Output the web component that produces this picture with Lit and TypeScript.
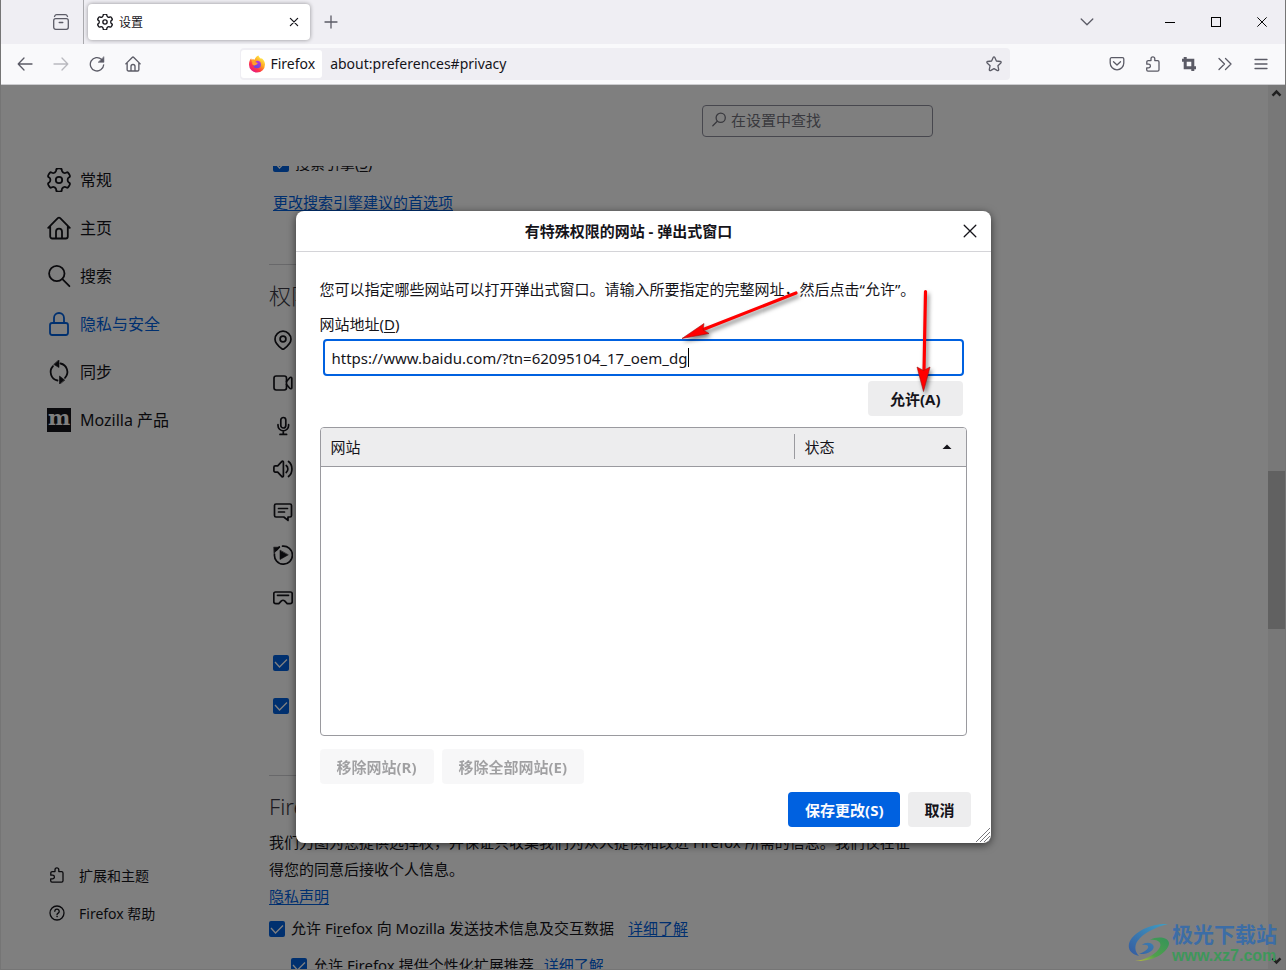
import { LitElement, html, css, svg, type TemplateResult } from "lit";
import { customElement, state } from "lit/decorators.js";

/* ---------- icons ---------- */

/* Six-toothed cog: corner points in polar form, joined by smooth curves. */
const cogPath = (() => {
  const corners: [number, number][] = [];
  for (let k = 0; k < 6; k++) {
    for (const [offset, radius] of [[-13, 12], [13, 12], [19, 8.8], [41, 8.8]]) {
      const angle = ((60 * k - 90 + offset) * Math.PI) / 180;
      corners.push([12 + radius * Math.cos(angle), 12 + radius * Math.sin(angle)]);
    }
  }
  const cut = (a: [number, number], b: [number, number], t: number) =>
    `${(a[0] + (b[0] - a[0]) * t).toFixed(2)} ${(a[1] + (b[1] - a[1]) * t).toFixed(2)}`;
  return corners
    .map((point, i) => {
      const next = corners[(i + 1) % corners.length];
      const after = corners[(i + 2) % corners.length];
      const start = i === 0 ? `M${cut(point, next, 0.6)}` : "";
      return `${start}L${cut(point, next, 0.6)}Q${next[0].toFixed(2)} ${next[1].toFixed(2)} ${cut(next, after, 0.4)}`;
    })
    .join("") + "Z";
})();

const ICONS: Record<string, { box: number; body: TemplateResult }> = {
  gear: { box: 24, body: svg`<path d=${cogPath}/><circle cx="12" cy="12" r="3.200"/>` },
  home: {
    box: 24,
    body: svg`<path d="M1.200 11.800 10.800 2.200c.7-.7 1.700-.7 2.400 0l9.600 9.600M3.200 10v10.500a2 2 0 0 0 2 2h13.600a2 2 0 0 0 2-2V10M9 22.300v-6.600a3 3 0 0 1 6 0v6.600"/>`,
  },
  search: { box: 24, body: svg`<circle cx="9.800" cy="9.500" r="7.700"/><path d="m15.400 15.200 7 7"/>` },
  lock: {
    box: 24,
    body: svg`<rect x="3" y="11" width="18" height="12" rx="2.200"/><path d="M7 11V6a5 5 0 0 1 10 0v5"/>`,
  },
  sync: {
    box: 24,
    body: svg`<path d="M10.500 20.500A8.600 8.600 0 0 1 6 6.200M13.500 3.500A8.600 8.600 0 0 1 18 17.800"/><path class="solid" d="M12 0v7.500L7 4.600zM12.500 24v-8l5 4z"/>`,
  },
  view: {
    box: 16,
    body: svg`<rect x=".7" y="4.700" width="14.600" height="10.600" rx="2"/><path d="M1.500 2.500C2 1.300 2.600.7 3.600.7h8.800c1 0 1.600.6 2.100 1.800M6.200 8.500h3.600"/>`,
  },
  back: { box: 16, body: svg`<path d="M15 8H1.200M7 2 1.200 8 7 14"/>` },
  forward: { box: 16, body: svg`<path d="M1 8h13.800M9 2l5.800 6L9 14"/>` },
  reload: {
    box: 16,
    body: svg`<path d="M14.700 8.800A6.700 6.700 0 1 1 12.600 3.400L14 4.800"/><path class="solid" d="M14.900 1v5.300H9.500z"/>`,
  },
  star: {
    box: 16,
    body: svg`<path d="M7.300 1.300c.3-.6 1.100-.6 1.400 0l1.700 3.700 4 .5c.7.1 1 .9.500 1.400l-3 2.800.8 4c.1.700-.6 1.200-1.200.9L8 12.600l-3.500 2c-.6.300-1.300-.2-1.200-.9l.8-4-3-2.800c-.5-.5-.2-1.300.5-1.400l4-.5z"/>`,
  },
  pocket: {
    box: 16,
    body: svg`<path d="M2.500 1.700h11c.7 0 1.300.6 1.300 1.300V7a6.800 6.800 0 0 1-13.600 0V3c0-.7.6-1.300 1.300-1.300zM4.500 5.800 8 9l3.500-3.200"/>`,
  },
  puzzle: {
    box: 16,
    body: svg`<path d="M3 15.200h9.600c.8 0 1.400-.6 1.400-1.400V6c0-.8-.6-1.400-1.400-1.400H9.800V2.700a1.900 1.900 0 0 0-3.800 0v1.900H3.200c-.8 0-1.400.6-1.400 1.400v2.200h1.800a1.700 1.700 0 0 1 0 3.600H1.700v2c0 .8.5 1.400 1.300 1.400z"/>`,
  },
  crop: { box: 16, body: svg`<path class="thick" d="M4.200 1v10.800H15M1 4.200h10.800V15"/>` },
  more: { box: 16, body: svg`<path d="m2 2.500 5.500 5.500L2 13.500M8.500 2.500 14 8l-5.500 5.500"/>` },
  menu: { box: 16, body: svg`<path d="M2 3.500h12M2 8h12M2 12.500h12"/>` },
  plus: { box: 16, body: svg`<path d="M8 2v12M2 8h12"/>` },
  close: { box: 16, body: svg`<path d="m2.200 2.200 11.600 11.600M13.800 2.200 2.200 13.800"/>` },
  chevron: { box: 16, body: svg`<path d="m2.200 5 5.800 5.800L13.800 5"/>` },
  minimize: { box: 16, body: svg`<path class="crisp" d="M3 8.500h10"/>` },
  maximize: { box: 16, body: svg`<rect class="crisp" x="3.500" y="3.500" width="9" height="9"/>` },
  help: {
    box: 16,
    body: svg`<circle cx="8" cy="8" r="7"/><path d="M5.800 6.300a2.200 2.200 0 1 1 3.400 1.800c-.8.5-1.200.8-1.200 1.700"/><circle class="solid" cx="8" cy="11.700" r=".4"/>`,
  },
  find: { box: 16, body: svg`<circle cx="9.700" cy="5.800" r="4.600"/><path d="M6.300 9.300 1.800 13.800"/>` },
  location: {
    box: 20,
    body: svg`<path d="M10 1.200a8 8 0 0 1 8 8c0 3.400-3 6.500-6.700 9.500a2 2 0 0 1-2.600 0C5 15.700 2 12.600 2 9.200a8 8 0 0 1 8-8z"/><circle cx="10" cy="9" r="2.900"/>`,
  },
  camera: {
    box: 20,
    body: svg`<rect x="1" y="3" width="12.500" height="14" rx="2.200"/><path d="m13.500 8.500 3.300-3.800c.7-.8 2-.5 2 .6v9.400c0 1.100-1.300 1.400-2 .6l-3.300-3.800"/>`,
  },
  mic: {
    box: 20,
    body: svg`<rect x="7.800" y="1.500" width="5" height="10.500" rx="2.500"/><path d="M5 8.700v.8a5.300 5.300 0 0 0 10.600 0v-.8M10.300 15v3.500M7 18.400h6.600"/>`,
  },
  speaker: {
    box: 20,
    body: svg`<path d="M.9 8.200c0-.8.500-1.300 1.300-1.300h2.500l4.200-4.500c.6-.6 1.500-.2 1.500.6v14c0 .8-.9 1.200-1.500.6l-4.200-4.500H2.200c-.8 0-1.300-.5-1.300-1.300zM13.200 6.500a4.500 4.500 0 0 1 0 7M15.500 2.500c4.600 3.500 4.600 11.500 0 15"/>`,
  },
  bubble: {
    box: 20,
    body: svg`<path d="M3 2h14c.9 0 1.500.6 1.500 1.500v10c0 .9-.6 1.500-1.500 1.500h-2v3.400L10.800 15H3c-.9 0-1.500-.6-1.500-1.500v-10C1.500 2.600 2.100 2 3 2zM5.500 6.500h9M5.500 10h6"/>`,
  },
  autoplay: {
    box: 20,
    body: svg`<path d="M9.500 1.200A9 9 0 1 1 1.500 9M6.200 2 3.500 5"/><path class="solid" d="M7 5.500v9l8-4.500zM1 2.200h6L1.200 8z"/>`,
  },
  headset: {
    box: 20,
    body: svg`<path d="M2.500 4h15C18.600 4 19.200 4.800 19.200 5.700v8c0 1.200-.8 2-2 2h-3L11.600 12.900c-.9-.9-2.300-.9-3.200 0L5.800 15.700h-3c-1.200 0-2-.8-2-2v-8C.8 4.800 1.400 4 2.500 4zM4.500 7.300h11"/>`,
  },
};

const icon = (name: string, size = 16) => {
  const { box, body } = ICONS[name];
  return html`<svg class="icon" width=${size} height=${size} viewBox="0 0 ${box} ${box}" aria-hidden="true">${body}</svg>`;
};

const firefoxLogo = html`<svg width="18" height="18" viewBox="0 0 18 18" aria-hidden="true">
  <defs>
    <linearGradient id="flame" x1=".85" y1=".1" x2=".2" y2=".95">
      <stop offset="0" stop-color="#fff44f" /><stop offset=".4" stop-color="#ffa21e" />
      <stop offset=".7" stop-color="#ff3647" /><stop offset="1" stop-color="#e31587" />
    </linearGradient>
    <linearGradient id="globe" x1=".7" y1="0" x2=".3" y2="1">
      <stop offset="0" stop-color="#b833e1" /><stop offset="1" stop-color="#5b4be0" />
    </linearGradient>
  </defs>
  <path fill="url(#flame)" d="M10.500.6c.4 1.600 1.500 2.300 2.600 3.300.3-.2.400-.6.400-1C15.800 4.600 17 7 17 9.500A8 8 0 0 1 1 9.700C1 7 1.800 4.800 3.200 3.300c0 .7.1 1.100.4 1.500.9-.4 1.900-.4 2.900 0C7.500 2.500 8.600 1.200 10.500.6z" />
  <path fill="url(#globe)" d="M8.500 6c2.600-.6 4.400 1 4.400 3.300a3.800 3.800 0 0 1-7.600.5c1 .8 2.300.7 3-.3l1.500-1.200c-.1-.7-1.200-.6-1.900-.9-.4-.3-.1-1.100.6-1.400z" />
  <path fill="#ffa02e" d="M3.600 5.100c1.300-.6 3-.2 3.700.6-.6.700-.6 1.300 0 1.800.6.400 2 .3 2.200.9-.3.800-1.500 1-2 1.600-.7.600-1.700.5-2.500 0-.9-.6-1-1.600-.6-2.500-.7-.7-.9-1.500-.8-2.400z" />
</svg>`;

const base = css`
  * {
    box-sizing: border-box;
  }
  button,
  input {
    font: inherit;
    color: inherit;
  }
  button {
    display: inline-flex;
    align-items: center;
    justify-content: center;
    padding: 0;
    border: 0;
    background: none;
  }
  a {
    color: #0060df;
    text-decoration: underline;
    text-underline-offset: 2px;
  }
  u {
    text-underline-offset: 2px;
  }
  .icon {
    flex: none;
    fill: none;
    stroke: currentColor;
    stroke-width: 1.3;
    stroke-linecap: round;
    stroke-linejoin: round;
  }
  .icon .solid {
    fill: currentColor;
    stroke-width: 0.6;
  }
  .icon .thick {
    stroke-width: 3;
    stroke-linecap: butt;
    stroke-linejoin: miter;
  }
  .icon .crisp {
    stroke-width: 1;
    shape-rendering: crispEdges;
  }
`;

/* ---------- tab strip and toolbar ---------- */

@customElement("browser-chrome")
class BrowserChrome extends LitElement {
  static styles = [
    base,
    css`
      :host {
        display: block;
        color: #5b5b66;
        border-bottom: 1px solid #cccccf;
      }
      .tabs {
        display: flex;
        align-items: center;
        height: 44px;
        padding-left: 40px;
        background: #efeef3;
      }
      .view {
        width: 42px;
        height: 44px;
        padding-right: 2px;
      }
      .tab {
        display: flex;
        align-items: center;
        gap: 6px;
        width: 222px;
        height: 36px;
        margin-left: 4px;
        padding: 0 11px 0 9px;
        border-radius: 4px;
        background: #fff;
        box-shadow: 0 0 4px rgba(0, 0, 0, 0.4);
        color: #15141a;
        font-size: 12px;
      }
      .tab .icon {
        stroke-width: 2;
      }
      .divider {
        width: 1px;
        height: 44px;
        background: #aaaaae;
      }
      .name {
        flex: 1;
      }
      .new {
        width: 36px;
        height: 36px;
        margin-left: 3px;
      }
      .grow {
        flex: 1;
      }
      .list {
        width: 36px;
        height: 36px;
        margin-right: 42px;
      }
      .win {
        width: 46px;
        height: 44px;
        color: #000;
      }
      .bar {
        display: flex;
        align-items: center;
        height: 40px;
        padding: 0 6px;
        background: #f9f9fb;
      }
      .tool {
        width: 36px;
        height: 32px;
      }
      .off {
        opacity: 0.4;
      }
      .house .icon {
        stroke-width: 2;
      }
      .space {
        flex: 2;
      }
      .url {
        display: flex;
        flex: 17;
        align-items: center;
        height: 32px;
        padding: 0 8px 0 1px;
        border-radius: 4px;
        background: #efeef3;
        color: #15141a;
        font-size: 14px;
        line-height: 20px;
      }
      .chip {
        gap: 4px;
        height: 28px;
        padding: 0 7px;
        border-radius: 3px;
        background: #fff;
      }
      .address {
        flex: 1;
        min-width: 0;
        margin: 0 8px;
        padding: 0;
        border: 0;
        outline: 0;
        background: none;
      }
      .star {
        color: #5b5b66;
      }
    `,
  ];

  private tool(name: string, label: string, cls = "tool") {
    return html`<button class=${cls} aria-label=${label}>${icon(name)}</button>`;
  }

  render() {
    return html`
      <div class="tabs">
        ${this.tool("view", "Firefox View", "view")}
        <span class="divider"></span>
        <div class="tab">
          ${icon("gear", 16)}<span class="name">设置</span>
          <button aria-label="关闭标签页">${icon("close", 10)}</button>
        </div>
        ${this.tool("plus", "新建标签页", "new")}
        <span class="grow"></span>
        ${this.tool("chevron", "列出所有标签页", "list")}
        ${this.tool("minimize", "最小化", "win")}
        ${this.tool("maximize", "最大化", "win")}
        <button class="win" aria-label="关闭">${icon("close", 12)}</button>
      </div>
      <div class="bar">
        ${this.tool("back", "后退")} ${this.tool("forward", "前进", "tool off")}
        ${this.tool("reload", "刷新")} ${this.tool("home", "主页", "tool house")}
        <span class="space"></span>
        <div class="url">
          <button class="chip">${firefoxLogo}<span>Firefox</span></button>
          <input class="address" aria-label="地址" .value=${"about:preferences#privacy"} />
          <button class="star" aria-label="添加书签">${icon("star")}</button>
        </div>
        <span class="space"></span>
        ${this.tool("pocket", "Pocket")} ${this.tool("puzzle", "扩展")}
        ${this.tool("crop", "截图")} ${this.tool("more", "更多工具")}
        ${this.tool("menu", "菜单")}
      </div>
    `;
  }
}

/* ---------- settings page ---------- */

const CATEGORIES = [
  ["gear", "常规"],
  ["home", "主页"],
  ["search", "搜索"],
  ["lock", "隐私与安全"],
  ["sync", "同步"],
  ["mozilla", "Mozilla 产品"],
];

const PERMISSIONS = [
  ["location", "位置"],
  ["camera", "摄像头"],
  ["mic", "麦克风"],
  ["speaker", "扬声器"],
  ["bubble", "通知"],
  ["autoplay", "自动播放"],
  ["headset", "虚拟现实"],
];

@customElement("settings-page")
class SettingsPage extends LitElement {
  @state() private current = "lock";

  static styles = [
    base,
    css`
      :host {
        display: flex;
        min-height: 0;
        color: #15141a;
        background: #fff;
        font-size: 15px;
        line-height: 27px;
      }
      .side {
        display: flex;
        flex: none;
        flex-direction: column;
        width: 268px;
        padding: 71px 0 37px 46px;
      }
      .side a {
        display: flex;
        align-items: center;
        color: inherit;
        text-decoration: none;
      }
      .side .icon {
        stroke-width: 1.8;
      }
      .cat {
        gap: 9px;
        height: 48px;
        font-size: 16px;
      }
      .side .on {
        color: #0060df;
      }
      .m {
        display: grid;
        place-items: center;
        width: 24px;
        height: 24px;
        padding-bottom: 4px;
        background: #15141a;
        color: #fff;
        font: 700 21px/20px "DejaVu Serif", serif;
      }
      .foot {
        margin-top: auto;
      }
      .foot a {
        gap: 14px;
        height: 38px;
        padding-left: 2px;
        font-size: 14px;
      }
      .foot .icon {
        stroke-width: 1.3;
      }
      .main {
        display: flex;
        flex: 1;
        flex-direction: column;
        min-width: 0;
      }
      .sticky {
        display: flex;
        flex: none;
        justify-content: flex-end;
        width: 100%;
        max-width: 664px;
        height: 81px;
        padding-top: 20px;
      }
      .find {
        display: flex;
        align-items: center;
        gap: 4px;
        width: 231px;
        height: 32px;
        padding: 0 8px 2px;
        border: 1px solid #8f8f9d;
        border-radius: 4px;
        color: #73737d;
      }
      .find input {
        flex: 1;
        min-width: 0;
        padding: 0;
        border: 0;
        outline: 0;
        background: none;
      }
      .find input::placeholder {
        color: #73737d;
        opacity: 1;
      }
      .scroll {
        flex: 1;
        min-height: 0;
        overflow: hidden;
      }
      .pane {
        max-width: 664px;
        margin-top: -16px;
      }
      .indent {
        padding-left: 4px;
      }
      .row {
        display: flex;
        align-items: center;
        gap: 6px;
        height: 27px;
      }
      .suggest {
        height: 26px;
        margin: 12px 0 49px;
      }
      h2 {
        margin: 0;
        padding: 15px 0 8px;
        border-top: 1px solid #d0d0d4;
        color: #3a3944;
        font-size: 22px;
        font-weight: 300;
        line-height: 30px;
      }
      .perms {
        margin: 0 0 22px;
        padding: 0 0 0 4px;
        list-style: none;
      }
      .perms li,
      .block {
        display: flex;
        align-items: center;
        height: 43px;
      }
      .perms .icon {
        stroke-width: 1.7;
      }
      .blocks {
        margin-bottom: 48px;
      }
      p {
        max-width: 648px;
        margin: 0;
      }
      input[type="checkbox"] {
        flex: none;
        width: 16px;
        height: 16px;
        margin: 0;
        appearance: none;
        border-radius: 2px;
        background: #0060df
          url("data:image/svg+xml,%3Csvg xmlns='http://www.w3.org/2000/svg' viewBox='0 0 16 16'%3E%3Cpath d='M2 7l4.500 5L14 4.500' fill='none' stroke='white' stroke-width='1.300'/%3E%3C/svg%3E");
      }
      .data {
        margin-top: 5px;
      }
      .data a {
        margin-left: 8px;
      }
      .nested {
        margin-top: 10px;
        padding-left: 22px;
      }
      .nested a {
        margin-left: 4px;
      }
      .scrollbar {
        display: flex;
        flex: none;
        flex-direction: column;
        width: 17px;
        background: #f0f0f0;
        color: #404040;
      }
      .scrollbar .icon {
        stroke-width: 3.6;
        stroke-linecap: butt;
        stroke-linejoin: miter;
      }
      .step {
        display: grid;
        place-items: center;
        height: 17px;
      }
      .up {
        transform: rotate(180deg);
      }
      .track {
        display: flex;
        flex: 1;
        flex-direction: column;
      }
      .before {
        flex: 369;
      }
      .thumb {
        flex: 158;
        background: #c2c2c2;
      }
      .after {
        flex: 323;
      }
    `,
  ];

  render() {
    return html`
      <nav class="side">
        ${CATEGORIES.map(
          ([id, label]) => html`<a
            class="cat ${this.current === id ? "on" : ""}"
            href="#${id}"
            @click=${() => (this.current = id)}
            >${id === "mozilla" ? html`<span class="m">m</span>` : icon(id, 24)}<span>${label}</span></a
          >`
        )}
        <div class="foot">
          <a href="#addons">${icon("puzzle")}<span>扩展和主题</span></a>
          <a href="#help">${icon("help")}<span>Firefox 帮助</span></a>
        </div>
      </nav>
      <div class="main">
        <div class="sticky">
          <label class="find">${icon("find")}<input aria-label="在设置中查找" placeholder="在设置中查找" /></label>
        </div>
        <div class="scroll">
          <div class="pane">
            <label class="row indent"><input type="checkbox" checked /><span>搜索引擎(<u>S</u>)</span></label>
            <div class="suggest indent"><a href="#search">更改搜索引擎建议的首选项</a></div>
            <h2>权限</h2>
            <ul class="perms">
              ${PERMISSIONS.map(([id, label]) => html`<li aria-label=${label}>${icon(id, 20)}</li>`)}
            </ul>
            <div class="blocks indent">
              <div class="block"><input type="checkbox" checked aria-label="阻止弹出式窗口" /></div>
              <div class="block"><input type="checkbox" checked aria-label="当网站尝试安装附加组件时发出警告" /></div>
            </div>
            <h2>Firefox 数据收集与使用</h2>
            <p>
              我们力图为您提供选择权，并保证只收集我们为众人提供和改进 Firefox
              所需的信息。我们仅在征得您的同意后接收个人信息。
            </p>
            <div><a href="#notice">隐私声明</a></div>
            <div class="row data">
              <input id="tech" type="checkbox" checked />
              <label for="tech">允许 Fi<u>r</u>efox 向 Mozilla 发送技术信息及交互数据</label>
              <a href="#tech">详细了解</a>
            </div>
            <div class="row nested">
              <input id="rec" type="checkbox" checked />
              <label for="rec">允许 Firefox 提供个性化扩展推荐</label>
              <a href="#rec">详细了解</a>
            </div>
          </div>
        </div>
      </div>
      <div class="scrollbar">
        <span class="step up">${icon("chevron", 11)}</span>
        <div class="track"><span class="before"></span><span class="thumb"></span><span class="after"></span></div>
        <span class="step">${icon("chevron", 11)}</span>
      </div>
    `;
  }
}

/* ---------- permissions dialog ---------- */

@customElement("permissions-dialog")
class PermissionsDialog extends LitElement {
  @state() private url = "https://www.baidu.com/?tn=62095104_17_oem_dg";

  static styles = [
    base,
    css`
      :host {
        display: block;
        position: relative;
        width: min(695px, 100% - 32px);
        border-radius: 8px;
        background: #fff;
        box-shadow: 0 2px 8px rgba(0, 0, 0, 0.6);
        color: #15141a;
        font-size: 15px;
        line-height: 22px;
      }
      header {
        display: flex;
        align-items: center;
        height: 41px;
        padding-right: 13px;
        border-bottom: 1px solid #d4d4d8;
      }
      h1 {
        flex: 1;
        margin: 0;
        font-size: 15px;
        text-align: center;
      }
      .body {
        padding: 26px 24px 16px;
      }
      p {
        margin: 0 0 13px;
      }
      .field {
        position: relative;
        margin: 4px 3px 5px;
      }
      .field input {
        display: block;
        width: 100%;
        height: 37px;
        padding: 0 7px;
        border: 2px solid #0061e0;
        border-radius: 4px;
        outline: 0;
        background: #fff;
      }
      .caret {
        position: absolute;
        top: 9px;
        left: 365px;
        width: 1px;
        height: 19px;
        background: #000;
      }
      .line {
        display: flex;
        gap: 8px;
      }
      .end {
        justify-content: flex-end;
      }
      .allow {
        padding-right: 4px;
      }
      .btn {
        height: 35px;
        padding: 0 17px;
        border-radius: 4px;
        background: #ededee;
        font-weight: 700;
      }
      .wide {
        padding: 0 22px;
      }
      .narrow {
        padding: 0 16px;
      }
      .btn:disabled {
        opacity: 0.4;
      }
      .primary {
        background: #0061e0;
        color: #fbfbfe;
      }
      .box {
        min-height: 309px;
        margin: 11px 0 13px;
        overflow: hidden;
        border: 1px solid #9a9a9f;
        border-radius: 4px;
      }
      table {
        width: 100%;
        border-collapse: collapse;
        table-layout: fixed;
      }
      th {
        height: 38px;
        padding: 0;
        border-bottom: 1px solid #9a9a9f;
        background: #ededee;
        font-weight: 400;
        text-align: left;
      }
      .status {
        width: 172px;
      }
      .sort {
        display: flex;
        justify-content: space-between;
        width: 100%;
        height: 25px;
        padding: 0 14px 0 10px;
      }
      .status .sort {
        border-left: 1px solid #9a9a9f;
      }
      footer {
        margin: 8px -4px 0 0;
      }
      .grip {
        position: absolute;
        right: 1px;
        bottom: 1px;
        stroke: #77777c;
        fill: none;
      }
      .arrows {
        position: absolute;
        top: 70px;
        left: 376px;
        overflow: visible;
        pointer-events: none;
        filter: drop-shadow(2px 3px 2px rgba(0, 0, 0, 0.5));
      }
      .shaft {
        stroke: #f00;
        stroke-width: 3.2;
        stroke-linecap: round;
      }
      .head {
        fill: #f00;
        stroke: #a01010;
        stroke-width: 0.6;
      }
    `,
  ];

  render() {
    return html`
      <header>
        <h1>有特殊权限的网站 - 弹出式窗口</h1>
        <button aria-label="关闭">${icon("close")}</button>
      </header>
      <div class="body">
        <p>您可以指定哪些网站可以打开弹出式窗口。请输入所要指定的完整网址，然后点击“允许”。</p>
        <label for="url">网站地址(<u>D</u>)</label>
        <div class="field">
          <input
            id="url"
            .value=${this.url}
            @input=${(e: Event) => (this.url = (e.target as HTMLInputElement).value)}
          />
          <span class="caret"></span>
        </div>
        <div class="line end allow"><button class="btn wide">允许(A)</button></div>
        <div class="box">
          <table>
            <thead>
              <tr>
                <th><button class="sort">网站</button></th>
                <th class="status">
                  <button class="sort">
                    状态<svg width="10" height="5" viewBox="0 0 10 5" aria-hidden="true"><path d="M.5 5 5 .5 9.500 5z" fill="#15141a" /></svg>
                  </button>
                </th>
              </tr>
            </thead>
          </table>
        </div>
        <div class="line">
          <button class="btn" disabled>移除网站(R)</button>
          <button class="btn" disabled>移除全部网站(E)</button>
        </div>
        <footer class="line end">
          <button class="btn primary">保存更改(S)</button>
          <button class="btn narrow">取消</button>
        </footer>
      </div>
      <svg class="grip" width="14" height="14" viewBox="0 0 14 14" aria-hidden="true">
        <path d="M0 14 14 0M4 14 14 4M8 14l6-6M12 14l2-2" />
      </svg>
      <svg class="arrows" width="270" height="120" viewBox="0 0 270 120" aria-hidden="true">
        <path class="shaft" d="M124 12 30 49M253.500 10.500 252 90" />
        <path class="head" d="M10 57.500 32 42.500 31 49l6 3.500zM251.500 110.500 245 86l6.500 3.500 6.500-3.500z" />
      </svg>
    `;
  }
}

/* ---------- window ---------- */

@customElement("app-root")
class AppRoot extends LitElement {
  static styles = [
    base,
    css`
      :host {
        display: flex;
        flex-direction: column;
        box-sizing: border-box;
        height: 100vh;
        overflow: hidden;
        border: solid #757575;
        border-width: 0 1px 1px;
        font-family: "Noto Sans", "Noto Sans CJK SC", sans-serif;
      }
      browser-chrome {
        flex: none;
      }
      .content {
        display: flex;
        flex: 1;
        flex-direction: column;
        position: relative;
        min-height: 0;
      }
      settings-page {
        flex: 1;
      }
      .overlay {
        position: absolute;
        inset: 0;
        display: flex;
        align-items: center;
        justify-content: center;
        background: rgba(0, 0, 0, 0.5);
      }
      .mark {
        position: absolute;
        right: 8px;
        bottom: 4px;
        display: flex;
        align-items: center;
        gap: 2px;
        color: #3c6da6;
        font-size: 21px;
        font-weight: 700;
        line-height: 26px;
      }
      .site {
        display: block;
        color: #3e975a;
        font: 700 16px/18px "Liberation Sans", sans-serif;
      }
    `,
  ];

  render() {
    return html`
      <browser-chrome></browser-chrome>
      <div class="content">
        <settings-page></settings-page>
        <div class="overlay"><permissions-dialog></permissions-dialog></div>
        <div class="mark">
          <svg width="42" height="40" viewBox="0 0 42 40" aria-hidden="true">
            <defs>
              <linearGradient id="blue" x1="1" y1="0" x2="0" y2="1">
                <stop offset="0" stop-color="#3f9fc4" /><stop offset="1" stop-color="#35599f" />
              </linearGradient>
              <linearGradient id="green" x1="1" y1="0" x2="0" y2="1">
                <stop offset="0" stop-color="#35935a" /><stop offset=".6" stop-color="#4fa04c" /><stop offset="1" stop-color="#c3bd3c" />
              </linearGradient>
            </defs>
            <path fill="url(#blue)" d="M40 1C26 0 7 7 1.500 19-1 26 3 31 11 33 6 28 6 21 12 15 18 9 28 4 40 1zM11 31c10 1 17-5 14-9-2-3-8-3-11 0 4-1 7 0 6 3-1 2-4 4-9 6z" />
            <path fill="url(#green)" d="M22 17c7-4 18-3 19 3 0 8-14 19-34 18 10-1 22-7 25-14 2-5-3-8-10-7z" />
          </svg>
          <div>极光下载站<span class="site">www.xz7.com</span></div>
        </div>
      </div>
    `;
  }
}
